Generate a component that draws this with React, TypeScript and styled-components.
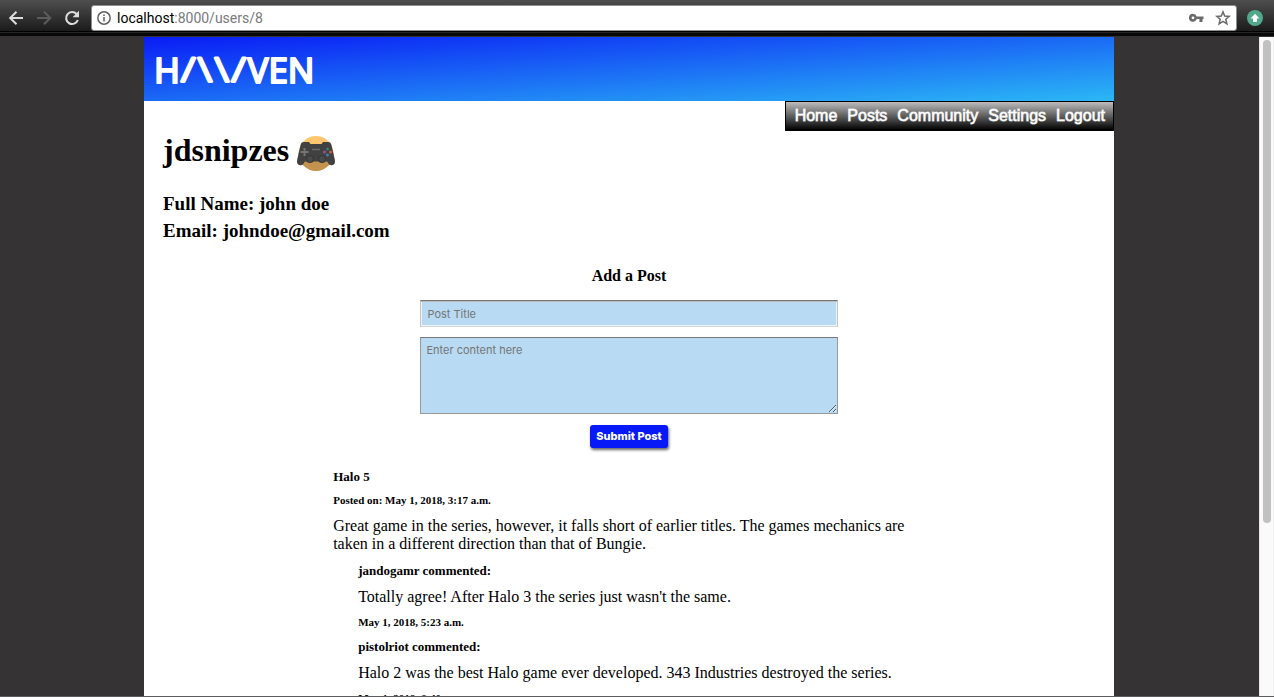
import React from "react";
import styled, { createGlobalStyle } from "styled-components";

const GlobalStyle = createGlobalStyle`
  *, *::before, *::after { box-sizing: border-box; }
  body {
    margin: 0;
    background: #353333;
    color: #000;
    font-family: "Liberation Serif", "Times New Roman", serif;
    font-size: 16px;
    line-height: 18px;
  }
  h1, h2, h3, h4, h5, h6, p { margin: 0; }
`;

const Browser = styled.div`
  display: flex;
  flex-direction: column;
  height: 100vh;
  overflow: hidden;
  border-bottom: 1px solid #5c5c5e;
`;

const Toolbar = styled.header`
  display: flex;
  align-items: center;
  gap: 8px;
  flex: none;
  height: 37px;
  padding: 5px 9px 6px 7px;
  background: linear-gradient(#4e4e4e 0, #1b1b1b 31px, #000 31px, #000 32px, #262626 32px, #262626 33px, #080808 33px, #080808 36px, #333 36px);
`;

const ToolButton = styled.button`
  display: flex;
  align-items: center;
  justify-content: center;
  flex: none;
  width: 20px;
  height: 20px;
  padding: 0;
  border: 0;
  background: none;
  color: ${(p) => p.color || "#dcdcdc"};
`;

const AddressBar = styled.div`
  display: flex;
  align-items: center;
  flex: 1;
  gap: 6px;
  min-width: 0;
  height: 26px;
  padding: 0 3px 0 5px;
  border: 1px solid #8f8f8f;
  border-radius: 3px;
  background: #fff;
`;

const Url = styled.div`
  flex: 1;
  color: #7a7a7a;
  font: 14px/20px Roboto, sans-serif;
  white-space: nowrap;
  b { color: #000; font-weight: 400; }
`;

const Viewport = styled.div`
  display: flex;
  flex: 1;
  min-height: 0;
`;

const Content = styled.div`
  flex: 1;
  min-width: 0;
  padding: 0 145px 0 144px;
  overflow: hidden;
`;

const ScrollTrack = styled.div`
  flex: none;
  width: 15px;
  padding: 3px;
  border-left: 1px solid #e8e8e8;
  border-right: 1px solid #ededed;
  background: #fafafa;
`;

const ScrollThumb = styled.div`
  width: 8px;
  height: 74%;
  border-radius: 4px;
  background: #c1c1c1;
`;

const Page = styled.div`
  display: flex;
  flex-direction: column;
  min-height: 100%;
  background: #fff;
`;

const Banner = styled.div`
  display: flex;
  align-items: center;
  height: 64px;
  padding: 0 8px;
  background: linear-gradient(to bottom right, #0a1cf5, #2bb8f5);
`;

const LogoLink = styled.a`
  display: block;
  height: 44px;
`;

const Nav = styled.nav`
  display: flex;
  align-self: flex-end;
  gap: 10px;
  height: 30px;
  padding: 0 8px 0 9px;
  border: 1px solid #000;
  background: linear-gradient(#bdbdbd, #000);
`;

const NavLink = styled.a`
  color: #fff;
  font: 16px/28px "Liberation Sans", Arial, sans-serif;
  text-decoration: none;
  -webkit-text-stroke: 1px rgba(255, 255, 255, 0.7);
`;

const Profile = styled.section`
  padding: 0 19px;
`;

const UserName = styled.h1`
  display: flex;
  align-items: flex-start;
  gap: 7px;
  height: 44px;
  font-size: 32px;
  line-height: 38px;
  svg { margin-top: 3px; }
`;

const Detail = styled.h3`
  font-size: 19px;
  line-height: 27px;
  &:first-of-type { margin-top: 15px; }
`;

const PostForm = styled.form`
  display: flex;
  flex-direction: column;
  align-items: center;
  width: 43%;
  margin: 23px auto 0;
`;

const FormTitle = styled.h4`
  margin-bottom: 15px;
`;

const TitleInput = styled.input`
  width: 100%;
  height: 27px;
  padding: 3px 6px;
  border: 1px solid;
  border-color: #777 #c4c4c4 #d6d6d6;
  border-radius: 0;
  background: #b8daf3;
  box-shadow: inset 0 1px #bcbcbc, inset 0 0 0 1px #eef3f7;
  font: 11px/14px Inter, sans-serif;
  &::placeholder { color: #757575; }
`;

const ContentInput = styled.textarea`
  width: 100%;
  height: 77px;
  margin: 10px 0 11px;
  padding: 5px;
  border: 1px solid #999;
  border-top-color: #777;
  border-radius: 0;
  background: #b8daf3;
  font: 11px/14px Inter, sans-serif;
  resize: both;
  &::placeholder { color: #757575; }
`;

const SubmitButton = styled.button`
  height: 23px;
  padding: 0 6px;
  border: 0;
  border-radius: 3px;
  background: #0719f7;
  box-shadow: 1px 2px 3px rgba(0, 0, 0, 0.6);
  color: #fff;
  font: 800 11px/23px Inter, sans-serif;
`;

const Post = styled.article`
  display: flex;
  flex-direction: column;
  gap: 10px;
  width: 61%;
  margin: 21px auto 0;
`;

const Comment = styled.section`
  display: flex;
  flex-direction: column;
  gap: 10px;
  margin-left: 25px;
`;

const Heading = styled.h5`
  font-size: 13px;
  line-height: 15px;
`;

const Stamp = styled.h6`
  margin-bottom: 1px;
  font-size: 11px;
  line-height: 12px;
`;

const BackIcon = () => (
  <svg width="20" height="20" viewBox="0 0 20 20" fill="none" stroke="currentColor" strokeWidth="2">
    <path d="M16 10H4M9.5 3.7L3.2 10L9.5 16.3" />
  </svg>
);

const ForwardIcon = () => (
  <svg width="20" height="20" viewBox="0 0 20 20" fill="none" stroke="currentColor" strokeWidth="2">
    <path d="M2 10H15M9 3.7L15.3 10L9 16.3" />
  </svg>
);

const ReloadIcon = () => (
  <svg width="20" height="20" viewBox="0 0 20 20" fill="none">
    <path d="M13.6 6A6 6 0 1 0 14.8 12" stroke="currentColor" strokeWidth="2.1" />
    <path d="M16 2.8V9.2H9.6Z" fill="currentColor" />
  </svg>
);

const InfoIcon = () => (
  <svg width="14" height="14" viewBox="0 0 14 14" fill="none" stroke="#5f6062" strokeWidth="1.5">
    <circle cx="7" cy="7" r="6.2" />
    <path d="M7 6V10.5M7 3.4V5" />
  </svg>
);

const KeyIcon = () => (
  <svg width="16" height="16" viewBox="0 0 16 16" fill="#6b6b6b">
    <path fillRule="evenodd" d="M4 3.8a4 4 0 1 0 3.7 5.3H10.5V12H13.5V9.1H14.5V6.5H7.7A4 4 0 0 0 4 3.8Zm0 2.6a1.4 1.4 0 1 1 0 2.8a1.4 1.4 0 0 1 0-2.8Z" />
  </svg>
);

const StarIcon = () => (
  <svg width="16" height="16" viewBox="0 0 16 16" fill="none" stroke="#6b6b6b" strokeWidth="1.5">
    <path d="M8 1.9L9.7 6.1L14.2 6.4L10.8 9.3L11.9 13.8L8 11.4L4.1 13.8L5.2 9.3L1.8 6.4L6.3 6.1Z" />
  </svg>
);

const UpdateIcon = () => (
  <svg width="16" height="16" viewBox="0 0 16 16">
    <circle cx="8" cy="8" r="8" fill="#52a88a" />
    <path d="M8 3.8L12.4 8.4H9.9V12H6.1V8.4H3.6Z" fill="#fff" />
  </svg>
);

const Logo = () => (
  <svg width="170" height="44" viewBox="0 0 170 44" role="img" aria-label="Haven">
    <text
      x="2"
      y="36"
      fill="#fff"
      stroke="#fff"
      strokeWidth="2"
      strokeLinejoin="round"
      fontFamily="Noto Sans, sans-serif"
      fontSize="35"
    >
      H
      <tspan dy="-4" strokeWidth="3" fontFamily="DejaVu Sans Mono, monospace" fontSize="28">{"/\\\\/"}</tspan>
      <tspan dy="4">VEN</tspan>
    </text>
  </svg>
);

const Controller = () => (
  <svg width="40" height="38" viewBox="0 0 40 38" aria-hidden="true">
    <defs>
      <linearGradient id="disc" x1="0" y1="0" x2="0" y2="1">
        <stop offset="50%" stopColor="#ffc66d" />
        <stop offset="50%" stopColor="#c4924f" />
      </linearGradient>
    </defs>
    <circle cx="20" cy="19.5" r="17.5" fill="url(#disc)" />
    <path d="M4.7 10.5Q5 8 7.5 8H13l1.5 2H25.5L27 8h5.5Q35 8 35.3 10.5L38.9 26Q39.6 30.8 36 31.2Q33 31.5 31.6 28L30.5 27.5H9.5L8.4 28Q7 31.5 4 31.2Q.4 30.8 1.1 26Z" fill="#414142" />
    <circle cx="14" cy="25" r="4" fill="#39393a" />
    <circle cx="26" cy="25" r="4" fill="#39393a" />
    <circle cx="14" cy="25" r="2.7" fill="#4a4a4b" />
    <circle cx="26" cy="25" r="2.7" fill="#4a4a4b" />
    <path d="M8.5 14V22M4.5 18H12.5" stroke="#747474" strokeWidth="2" />
    <path d="M16 15.5H24" stroke="#6b6b6b" strokeWidth="1.4" />
    <circle cx="31.5" cy="15" r="1.5" fill="#3a7d76" />
    <circle cx="28.5" cy="18" r="1.5" fill="#8a5a86" />
    <circle cx="34.5" cy="18" r="1.5" fill="#d05a50" />
    <circle cx="31.5" cy="21" r="1.5" fill="#437db0" />
  </svg>
);

const links = ["Home", "Posts", "Community", "Settings", "Logout"];

const comments = [
  { author: "jandogamr", text: "Totally agree! After Halo 3 the series just wasn't the same.", date: "May 1, 2018, 5:23 a.m." },
  { author: "pistolriot", text: "Halo 2 was the best Halo game ever developed. 343 Industries destroyed the series.", date: "May 1, 2018, 6:40 a.m." },
];

export default function App() {
  return (
    <Browser>
      <GlobalStyle />
      <Toolbar>
        <ToolButton aria-label="Back"><BackIcon /></ToolButton>
        <ToolButton aria-label="Forward" color="#5c5c5c"><ForwardIcon /></ToolButton>
        <ToolButton aria-label="Reload"><ReloadIcon /></ToolButton>
        <AddressBar>
          <InfoIcon />
          <Url><b>localhost</b>:8000/users/8</Url>
          <ToolButton aria-label="Saved passwords"><KeyIcon /></ToolButton>
          <ToolButton aria-label="Bookmark this page"><StarIcon /></ToolButton>
        </AddressBar>
        <ToolButton aria-label="Update"><UpdateIcon /></ToolButton>
      </Toolbar>
      <Viewport>
        <Content>
          <Page>
            <Banner>
              <LogoLink href="#"><Logo /></LogoLink>
            </Banner>
            <Nav>
              {links.map((l) => <NavLink key={l} href="#">{l}</NavLink>)}
            </Nav>
            <Profile>
              <UserName>jdsnipzes <Controller /></UserName>
              <Detail>Full Name: john doe</Detail>
              <Detail>Email: johndoe@gmail.com</Detail>
            </Profile>
            <PostForm onSubmit={(e) => e.preventDefault()}>
              <FormTitle>Add a Post</FormTitle>
              <TitleInput aria-label="Post Title" placeholder="Post Title" />
              <ContentInput aria-label="Content" placeholder="Enter content here" />
              <SubmitButton>Submit Post</SubmitButton>
            </PostForm>
            <Post>
              <Heading>Halo 5</Heading>
              <Stamp>Posted on: May 1, 2018, 3:17 a.m.</Stamp>
              <p>
                Great game in the series, however, it falls short of earlier titles. The games mechanics are
                taken in a different direction than that of Bungie.
              </p>
              {comments.map((c) => (
                <Comment key={c.author}>
                  <Heading>{c.author} commented:</Heading>
                  <p>{c.text}</p>
                  <Stamp>{c.date}</Stamp>
                </Comment>
              ))}
            </Post>
          </Page>
        </Content>
        <ScrollTrack><ScrollThumb /></ScrollTrack>
      </Viewport>
    </Browser>
  );
}
